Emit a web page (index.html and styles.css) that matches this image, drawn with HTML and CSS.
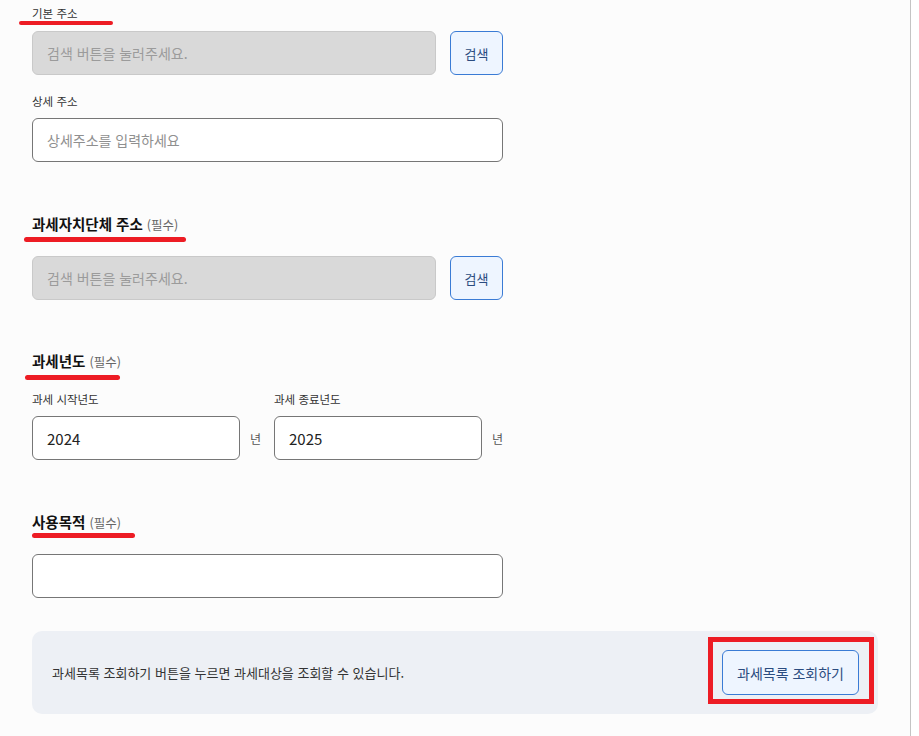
FILE: index.html
```html
<!DOCTYPE html>
<html lang="ko">
	<head>
		<title>과세목록 조회</title>
		<meta charset="utf-8">
		<meta name="viewport" content="width=device-width, initial-scale=1.0">
		<link rel="stylesheet" href="styles.css">
	</head>
	<body>
		<div class="main">

			<div class="group">
				<label class="sub-label first">기본 주소<span class="mark mark-base"></span></label>
				<div class="row">
					<input class="field field-readonly" type="text" placeholder="검색 버튼을 눌러주세요." readonly>
					<button class="btn-search">검색</button>
				</div>
				<label class="sub-label detail">상세 주소</label>
				<input class="field" type="text" placeholder="상세주소를 입력하세요">
			</div>

			<div class="group">
				<div class="heading heading-org">과세자치단체 주소 <span class="req">(필수)</span><span class="mark mark-org"></span></div>
				<div class="row">
					<input class="field field-readonly" type="text" placeholder="검색 버튼을 눌러주세요." readonly>
					<button class="btn-search">검색</button>
				</div>
			</div>

			<div class="group">
				<div class="heading heading-year">과세년도 <span class="req">(필수)</span><span class="mark mark-year"></span></div>
				<div class="years">
					<div class="year-col">
						<label class="sub-label">과세 시작년도</label>
						<div class="year-row">
							<input class="field field-year" type="text" value="2024">
							<span class="unit">년</span>
						</div>
					</div>
					<div class="year-col">
						<label class="sub-label">과세 종료년도</label>
						<div class="year-row">
							<input class="field field-year" type="text" value="2025">
							<span class="unit">년</span>
						</div>
					</div>
				</div>
			</div>

			<div class="group">
				<div class="heading heading-purpose">사용목적 <span class="req">(필수)</span><span class="mark mark-purpose"></span></div>
				<input class="field" type="text">
			</div>

			<div class="notice">
				<p class="notice-text">과세목록 조회하기 버튼을 누르면 과세대상을 조회할 수 있습니다.</p>
				<div class="btn-wrap">
					<button class="btn-list">과세목록 조회하기</button>
					<span class="highlight"></span>
				</div>
			</div>

		</div>
	</body>
</html>
```

FILE: styles.css
```css
html, body {
	width: 100%;
	height: 100%;
}
body {
	margin: 0;
	background-color: #ffffff;
	font-family: "Noto Sans CJK KR", "Noto Sans", sans-serif;
	color: #222222;
	overflow: hidden;
}
.main {
	box-sizing: border-box;
	width: 911px;
	min-height: 100%;
	padding: 5px 0 0 32px;
	background-color: #fcfcfc;
	border-right: 1px solid #c4c4c4;
}
.group {
	width: 471px;
}
.sub-label {
	position: relative;
	display: block;
	font-size: 11.5px;
	line-height: 16px;
	color: #333333;
	margin-bottom: 9px;
}
.sub-label.first {
	margin-bottom: 10px;
}
.sub-label.detail {
	margin-top: 18px;
}
.heading {
	position: relative;
	font-size: 14.5px;
	font-weight: bold;
	line-height: 20px;
	color: #111111;
}
.heading-org {
	margin-top: 52px;
	margin-bottom: 21px;
}
.heading-year {
	margin-top: 51px;
	margin-bottom: 19px;
}
.heading-purpose {
	margin-top: 52px;
	margin-bottom: 21px;
}
.req {
	font-size: 12.5px;
	font-weight: normal;
	color: #666666;
}
.mark {
	position: absolute;
	height: 5px;
	border-radius: 3px;
	background-color: #ed1c24;
}
.mark-base {
	left: -13px;
	top: 16px;
	width: 94px;
	height: 4px;
}
.mark-org {
	left: -8px;
	top: 23px;
	width: 162px;
}
.mark-year {
	left: -7px;
	top: 24px;
	width: 95px;
}
.mark-purpose {
	left: 0;
	top: 21px;
	width: 103px;
}
.row {
	display: flex;
	gap: 14px;
}
.field {
	box-sizing: border-box;
	display: block;
	width: 471px;
	height: 44px;
	padding: 0 14px;
	border: 1px solid #767676;
	border-radius: 6px;
	background-color: #ffffff;
	font-family: "Noto Sans CJK KR", "Noto Sans", sans-serif;
	font-size: 14px;
	color: #222222;
	outline: none;
}
.field::placeholder {
	color: #8f8f8f;
}
.field-readonly {
	width: 404px;
	background-color: #d9d9d9;
	border-color: #c9c9c9;
}
.field-readonly::placeholder {
	color: #9b9b9b;
}
.btn-search {
	box-sizing: border-box;
	flex: none;
	width: 53px;
	height: 44px;
	border: 1px solid #3a7bd5;
	border-radius: 6px;
	background-color: #eef5ff;
	font-family: "Noto Sans CJK KR", "Noto Sans", sans-serif;
	font-size: 13px;
	color: #2b4c80;
	cursor: pointer;
}
.years {
	display: flex;
}
.year-col {
	flex: none;
	width: 242px;
}
.year-row {
	display: flex;
	align-items: center;
}
.field-year {
	flex: none;
	width: 208px;
	font-size: 15px;
}
.unit {
	margin-left: 10px;
	font-size: 12px;
	color: #555555;
}
.notice {
	box-sizing: border-box;
	display: flex;
	align-items: center;
	justify-content: space-between;
	width: 846px;
	margin-top: 33px;
	padding: 19px 19px 19px 20px;
	border-radius: 10px;
	background-color: #edf0f5;
}
.notice-text {
	margin: 0;
	font-size: 13px;
	color: #333333;
}
.btn-wrap {
	position: relative;
}
.btn-list {
	box-sizing: border-box;
	display: block;
	width: 137px;
	height: 45px;
	border: 1px solid #3a7bd5;
	border-radius: 6px;
	background-color: #eef5ff;
	font-family: "Noto Sans CJK KR", "Noto Sans", sans-serif;
	font-size: 14px;
	color: #2b4c80;
	cursor: pointer;
}
.highlight {
	position: absolute;
	top: -13px;
	left: -14px;
	right: -15px;
	bottom: -9px;
	border: 5px solid #ed1c24;
	pointer-events: none;
}
```
